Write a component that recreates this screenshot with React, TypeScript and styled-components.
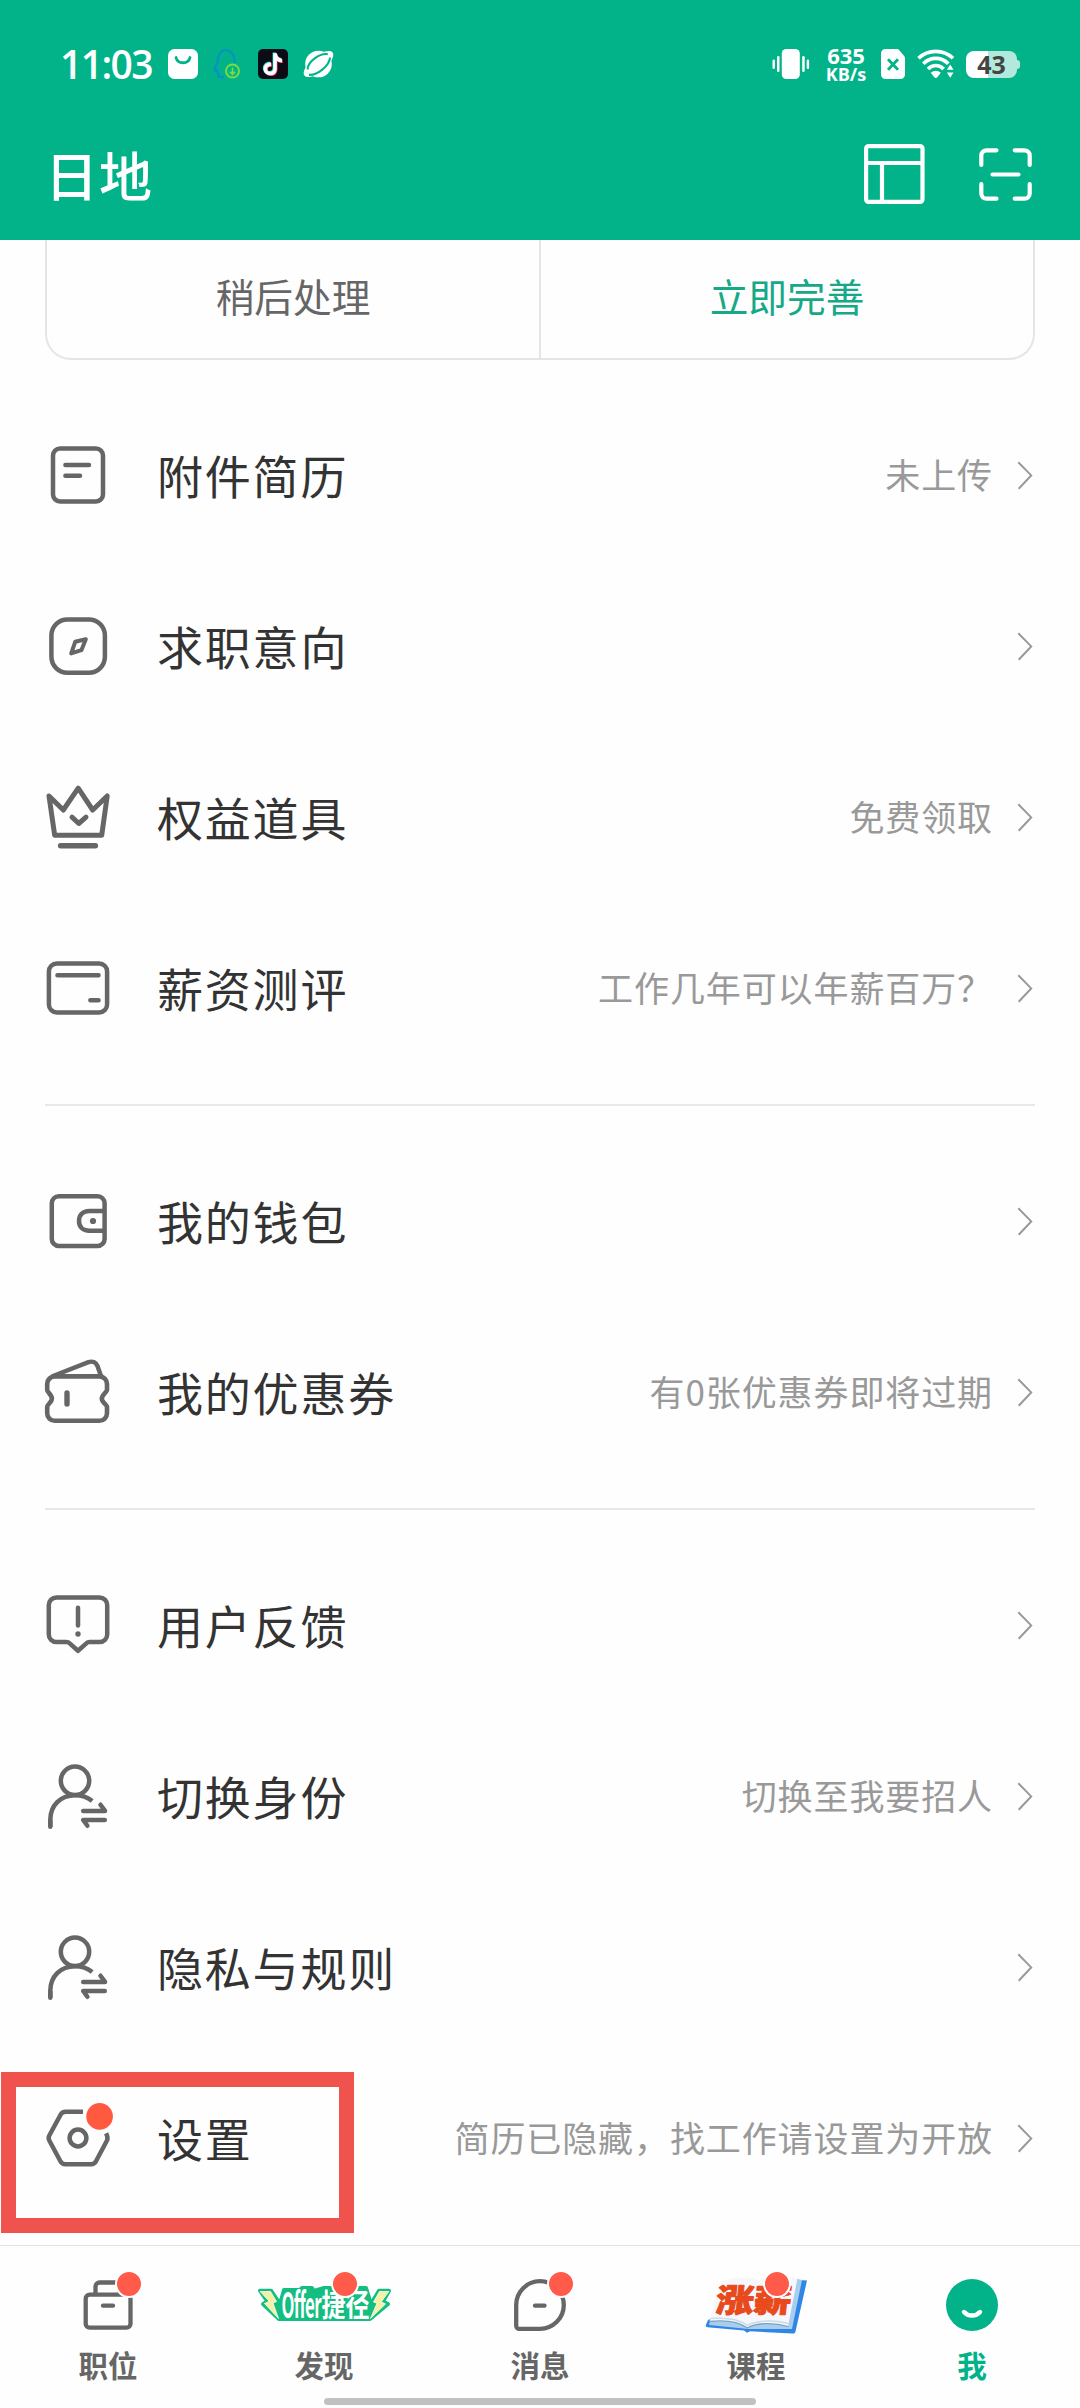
import React from 'react';
import styled, { createGlobalStyle } from 'styled-components';

const GREEN = '#02b38a';
const GREY = '#666666';
const RED = '#ff5a4a';

const GlobalStyle = createGlobalStyle`
  *, *::before, *::after { box-sizing: border-box; }
  body {
    margin: 0;
    background: #fefefe;
    font-family: "Noto Sans CJK SC", "Noto Sans", sans-serif;
  }
`;

const Screen = styled.div`
  position: relative;
  display: flex;
  flex-direction: column;
  width: 1080px;
  height: 2408px;
  overflow: hidden;
  background: #fefefe;
`;

const Header = styled.header`
  height: 240px;
  background: ${GREEN};
  color: #fff;
`;

const StatusBar = styled.div`
  display: flex;
  justify-content: space-between;
  align-items: center;
  height: 128px;
  padding: 0 60px 0 60px;
`;

const StatusGroup = styled.div<{ $gap: number }>`
  display: flex;
  align-items: center;
  gap: ${(p) => p.$gap}px;
`;

const Clock = styled.span`
  width: 91px;
  margin-right: 1px;
  font: 600 39px/40px "Open Sans", "Noto Sans", sans-serif;
  letter-spacing: -1.6px;
  white-space: nowrap;
`;

const Speed = styled.div`
  display: flex;
  flex-direction: column;
  align-items: center;
  gap: 1px;
  width: 44px;
  margin-left: 2px;
  margin-right: 1px;
  font-family: "Open Sans", "Noto Sans", sans-serif;
  font-weight: 700;
`;

const SpeedValue = styled.span`
  font-size: 22px;
  line-height: 18px;
`;

const SpeedUnit = styled.span`
  font-size: 18px;
  line-height: 18px;
`;

const Battery = styled.div`
  position: relative;
  display: flex;
  align-items: center;
  justify-content: center;
  width: 51px;
  height: 27px;
  margin-left: -1px;
  margin-right: 3px;
  border-radius: 8px;
  background: linear-gradient(90deg, #fff 44%, #b3e8dc 44%);
  color: #444;
  font: 700 25px/27px "Open Sans", "Noto Sans", sans-serif;

  &::after {
    content: '';
    position: absolute;
    right: -3px;
    top: 9px;
    width: 3px;
    height: 9px;
    border-radius: 0 3px 3px 0;
    background: #b3e8dc;
  }
`;

const TitleBar = styled.div`
  display: flex;
  justify-content: space-between;
  align-items: center;
  height: 92px;
  padding: 0 48px 0 45px;
`;

const Title = styled.h1`
  margin: 0;
  font-size: 53px;
  font-weight: 500;
  line-height: 60px;
  letter-spacing: 1px;
`;

const Actions = styled.div`
  display: flex;
  align-items: center;
  gap: 54px;
`;

const Card = styled.section`
  display: flex;
  height: 120px;
  margin: 0 45px;
  border: 2px solid #e5e5e5;
  border-top: none;
  border-radius: 0 0 26px 26px;
`;

const CardAction = styled.button<{ $primary?: boolean }>`
  flex: 1;
  padding: 0 0 8px;
  border: none;
  border-left: ${(p) => (p.$primary ? '2px solid #e5e5e5' : 'none')};
  background: none;
  color: ${(p) => (p.$primary ? '#16a887' : GREY)};
  font: 400 38.7px/56px "Noto Sans CJK SC", sans-serif;
`;

const Menu = styled.main`
  display: flex;
  flex-direction: column;
  padding-top: 30px;
`;

const Row = styled.div`
  display: flex;
  align-items: center;
  height: 171px;
  padding: 0 45px 0 42px;
`;

const RowLabel = styled.span`
  flex: 1;
  margin: 0 0 3px 43px;
  color: #333;
  font-size: 46px;
  line-height: 60px;
  letter-spacing: 1.8px;
  white-space: nowrap;
`;

const RowValue = styled.span`
  margin: 0 25px 3px 0;
  color: #999;
  font-size: 35px;
  line-height: 50px;
  letter-spacing: 0.9px;
  white-space: nowrap;
`;

const Divider = styled.hr`
  width: 990px;
  height: 2px;
  margin: 30px 45px;
  border: none;
  background: #e8e8e8;
`;

const TabBar = styled.nav`
  display: grid;
  grid-template-columns: repeat(5, 1fr);
  height: 163px;
  margin-top: auto;
  border-top: 1px solid #e3e3e3;
`;

const Tab = styled.div<{ $active?: boolean }>`
  position: relative;
  display: flex;
  flex-direction: column;
  align-items: center;
  padding-top: 26px;
  color: ${(p) => (p.$active ? GREEN : GREY)};
`;

const TabLabel = styled.span`
  margin-top: 8px;
  font-size: 29.5px;
  font-weight: 700;
  line-height: 40px;
`;

const TabBadge = styled.i`
  position: absolute;
  left: 115px;
  top: 24px;
  width: 28px;
  height: 28px;
  border: 2px solid #fff;
  border-radius: 50%;
  background: ${RED};
`;

const Highlight = styled.div`
  position: absolute;
  left: 1px;
  top: 2072px;
  width: 353px;
  height: 161px;
  border: 15px solid #f0524d;
`;

const HomeIndicator = styled.div`
  position: absolute;
  left: 324px;
  bottom: 3px;
  width: 432px;
  height: 7px;
  border-radius: 4px;
  background: #c1c1c1;
`;

const Glyph = styled.svg`
  display: block;
  flex: none;
  overflow: visible;
`;

const RowGlyph = ({ children }: { children: React.ReactNode }) => (
  <Glyph width="72" height="71" viewBox="0 0 72 71" fill="none" stroke={GREY} strokeWidth="4.5" strokeLinecap="round" strokeLinejoin="round">
    {children}
  </Glyph>
);

const ResumeIcon = () => (
  <RowGlyph>
    <rect x="11" y="8.5" width="50" height="53" rx="7" />
    <path d="M23.4 25H47M23.4 35.8H38" />
  </RowGlyph>
);

const CompassIcon = () => (
  <RowGlyph>
    <rect x="9.4" y="8.4" width="53.5" height="53.4" rx="16" />
    <path d="M43.8 28.2 33.2 30.8 29.2 42.4 39.4 39.2Z" strokeWidth="4" />
  </RowGlyph>
);

const CrownIcon = () => (
  <RowGlyph>
    <path d="M7 14 21.3 28 36.2 6.2 50.7 28 65.2 14 59.7 53.3H12.7Z" strokeWidth="5" />
    <path d="M30 35.2 36.8 41.5 44 35.2" strokeWidth="5" />
    <path d="M18.6 63.8H53.4" strokeWidth="5.4" />
  </RowGlyph>
);

const CardIcon = () => (
  <RowGlyph>
    <rect x="6.9" y="10.4" width="58.2" height="49" rx="8" />
    <path d="M15.5 22.3H56.5M48.4 47.3H56.5" strokeWidth="4.6" />
  </RowGlyph>
);

const WalletIcon = () => (
  <RowGlyph>
    <rect x="9.8" y="10.2" width="52.8" height="49.8" rx="7" />
    <path d="M62 25H47.5C40.5 25 37 29.3 37 35s3.5 9.7 10.5 9.7H62" />
    <circle cx="51" cy="35" r="3.1" fill={GREY} stroke="none" />
  </RowGlyph>
);

const CouponIcon = () => (
  <RowGlyph>
    <path d="M13 19.4H57.5a7.5 7.5 0 0 1 7.5 7.5V33c0 2-5.2 5-5.2 8.7s5.2 5.6 5.2 8.3V56.3a7.5 7.5 0 0 1-7.5 7.5H12.7a7.5 7.5 0 0 1-7.5-7.5V50c0-2.7 4.7-4.6 4.7-8.3S5.2 35 5.2 33V26.9A7.5 7.5 0 0 1 13 19.4Z" strokeWidth="4.6" />
    <path d="M11 19 46.5 5.2c4.5-1.6 7.8.5 9 3.8L59 19" />
    <path d="M25 36V47" strokeWidth="5.4" />
  </RowGlyph>
);

const FeedbackIcon = () => (
  <RowGlyph>
    <path d="M14.5 7.4H57.5a7.7 7.7 0 0 1 7.7 7.7V44.4a7.7 7.7 0 0 1-7.7 7.7H47.5c-2 0-2.8.5-4 2L36 60.8 28.5 54.1c-1.2-1.5-2-2-4-2H14.5a7.7 7.7 0 0 1-7.7-7.7V15.1a7.7 7.7 0 0 1 7.7-7.7Z" />
    <path d="M36 17.8V35.4" />
    <circle cx="36" cy="44" r="2.7" fill={GREY} stroke="none" />
  </RowGlyph>
);

const SwitchUserIcon = () => (
  <RowGlyph>
    <circle cx="33" cy="19.8" r="14.2" />
    <path d="M8.3 65.8V59C8.3 44.5 18.5 34.3 33 34.3c7 0 12.5 2 17.2 5.8" strokeLinecap="butt" />
    <path d="M8.3 65.7V60" />
    <path d="M41.2 49.9H63L58.5 43.7M62.8 59H41.2L45.4 64.8" />
  </RowGlyph>
);

const SettingsIcon = () => (
  <RowGlyph>
    <path d="M41 8.7H23.5c-2.7 0-3.7.7-4.8 2.8L7.3 32.5c-1 1.9-1 3.1 0 5l11 20.5c1.1 2.2 2.3 3.2 4.8 3.2H49.3c2.5 0 3.7-1 4.8-3.2L65 37.5c1.1-2 .9-3.6-.9-7.2" strokeLinecap="butt" />
    <circle cx="36" cy="35" r="8.4" />
    <circle cx="57.6" cy="13.4" r="13.3" fill="#ff5a40" stroke="none" />
  </RowGlyph>
);

const Chevron = () => (
  <Glyph width="17" height="30" viewBox="0 0 17 30" fill="none" stroke="#999" strokeWidth="2">
    <path d="M.3 1.2 13.2 14.4.7 27.8" />
  </Glyph>
);

const BagIcon = () => (
  <Glyph width="30" height="30" viewBox="0 0 30 30">
    <rect width="30" height="30" rx="6.5" fill="#fff" />
    <path d="M8 8.5c1.5 7 12.5 7 14 0" fill="none" stroke={GREEN} strokeWidth="2.8" strokeLinecap="round" />
  </Glyph>
);

const PenguinIcon = () => (
  <Glyph width="29" height="30" viewBox="-1 0 29 30" fill="none">
    <path d="M10 27.5c-3 1.7-7 .7-5.3-2.3C3.500 24 3.200 22.700 3 21.500 1.500 23.500.3 21.500 1 18.700c.4-1.800 1.700-3.600 2.600-5C3.400 6.200 6.800 1.300 12 1.300s9 4.700 8.700 12" stroke="#0a8fc8" strokeWidth="2.1" strokeLinecap="round" />
    <circle cx="18.5" cy="22" r="6.5" stroke="#7bdc42" strokeWidth="1.9" />
    <path d="M18.5 18.500v6.600m-2.600-2.400 2.600 2.600 2.600-2.600" stroke="#7bdc42" strokeWidth="1.600" />
  </Glyph>
);

const NOTE = 'M16.3 4.5h3.5c.4 3.2 2.2 5.1 5.2 5.5v3.6c-2-.1-3.7-.7-5.2-1.7v8c0 4.3-3 6.6-6.5 6.6-3.7 0-6.7-2.7-6.7-6.4 0-4.1 3.4-6.8 7.5-6.3v3.7c-2.2-.6-3.9.7-3.9 2.6 0 1.7 1.3 2.8 3 2.8 1.9 0 3.1-1.2 3.1-3.3Z';

const TiktokIcon = () => (
  <Glyph width="30" height="30" viewBox="0 0 30 30">
    <rect width="30" height="30" rx="5" fill="#0c0c16" />
    <path d={NOTE} fill="#2ce6e0" transform="translate(-1.7 -.9)" />
    <path d={NOTE} fill="#f8335c" transform="translate(-.3 .5)" />
    <path d={NOTE} fill="#fff" transform="translate(-1 -.2)" />
  </Glyph>
);

const PlanetIcon = () => (
  <Glyph width="31" height="30" viewBox="0 0 31 30">
    <circle cx="15.5" cy="15" r="13.3" fill="#fff" />
    <ellipse cx="15.5" cy="15" rx="18.2" ry="7.6" transform="rotate(-40 15.5 15)" fill="#fff" />
    <path d="M4.6 20.500C4.500 12.500 17 3.800 24.800 5.200" fill="none" stroke={GREEN} strokeWidth="2.1" />
    <path d="M6 25.800C14 26.500 26.500 17 27 8.500" fill="none" stroke={GREEN} strokeWidth="2.1" />
  </Glyph>
);

const VibrateIcon = () => (
  <Glyph width="38" height="30" viewBox="0 0 38 30" fill="#fff">
    <rect x="9.8" width="18" height="30" rx="4.5" />
    <rect x=".5" y="10.5" width="2.4" height="9.5" rx="1.2" />
    <rect x="5" y="7" width="2.5" height="16" rx="1.2" />
    <rect x="30.2" y="7" width="2.5" height="16" rx="1.2" />
    <rect x="34.7" y="10.5" width="2.4" height="9.5" rx="1.2" />
  </Glyph>
);

const SimIcon = () => (
  <Glyph width="24" height="30" viewBox="0 0 24 30">
    <path d="M4.5 0H15.5c1.5 0 2 .4 3 1.5l4 4.7c1 1.1 1.5 2 1.5 3.5V25.5a4.5 4.5 0 0 1-4.5 4.5h-15A4.5 4.5 0 0 1 0 25.5v-21A4.5 4.5 0 0 1 4.5 0Z" fill="#fff" />
    <path d="m7 10.3 10 10.4m0-10.4L7 20.7" stroke={GREEN} strokeWidth="2.8" />
  </Glyph>
);

const WifiIcon = () => (
  <Glyph width="38" height="30" viewBox="0 0 38 30" fill="none" stroke="#fff" strokeWidth="3.7">
    <path d="M1.5 9.3C11 0 26.5 0 36 9.3" />
    <path d="M6.3 14.8c7-7.2 18-7.2 25 0" />
    <path d="M11 20c4.7-4.7 11-4.7 15.6 0" />
    <path d="M13.8 23.8c3-2.7 7-2.7 10 0l-3.5 4.5c-.9 1-2.1 1-3 0Z" fill="#fff" stroke="none" />
    <path d="m33.2 15.5 3.3 5.3h-6.6Zm0 13.3-3.3-5.3h6.6Z" fill="#fff" stroke="none" />
  </Glyph>
);

const LayoutIcon = () => (
  <Glyph width="61" height="60" viewBox="0 0 61 60" fill="none" stroke="#fff" strokeWidth="4.2">
    <rect x="2.1" y="2.1" width="56.4" height="55.8" rx="2.5" />
    <path d="M2 19H58M18 19V58" />
  </Glyph>
);

const ScanIcon = () => (
  <Glyph width="53" height="53" viewBox="0 0 53 53" fill="none" stroke="#fff" strokeWidth="4.2" strokeLinecap="round">
    <path d="M17.5 2.3H7.5a5.2 5.2 0 0 0-5.2 5.2V17M35.7 2.3H45.5a5.2 5.2 0 0 1 5.2 5.2V17M17.5 50.7H7.5a5.2 5.2 0 0 1-5.2-5.2V36M35.7 50.7H45.5a5.2 5.2 0 0 0 5.2-5.2V36M13.5 26.5H39.5" />
  </Glyph>
);

const TabGlyph = ({ children }: { children: React.ReactNode }) => (
  <Glyph width="140" height="64" viewBox="-70 0 140 64" fill="none" stroke={GREY} strokeWidth="4.3" strokeLinecap="round" strokeLinejoin="round">
    {children}
  </Glyph>
);

const JobsIcon = () => (
  <TabGlyph>
    <rect x="-22.3" y="22.7" width="44.8" height="33" rx="4" />
    <path d="M-12.5 22V14.5a4 4 0 0 1 4-4H12V22" />
    <path d="M-5 33.7H5" />
  </TabGlyph>
);

const OfferLogo = () => (
  <TabGlyph>
    <path d="M-64 18.7H-53L-44 32-40 18H-24L-22 16H-12L-10 19 0 16H42L47 32 55 18.7H65L59 29.5 64 32 46 47H-45L-61 32-56.5 29.5Z" fill="#14bd80" stroke="#14bd80" strokeWidth="4" />
    <path d="M-63.5 19.5H-53.5L-47.5 29.5-51 31-45.5 46.5-59.5 31.5-55 29.5Z" fill="#f4f1a4" stroke="#fff" strokeWidth=".8" />
    <path d="M64.5 19.5H55.5L49.5 30 53 31.2 46.5 46.5 61.5 32 57.5 30Z" fill="#f4f1a4" stroke="#fff" strokeWidth=".8" />
    <g fill="#fff" stroke="none" fontFamily='"Noto Sans CJK SC", sans-serif' fontWeight="700">
      <text transform="translate(-42.5 46) scale(.58 1.22)" fontSize="29" letterSpacing="-1">Offer</text>
      <text transform="translate(-2.5 43.5) scale(.8 1.02)" fontSize="30">捷径</text>
    </g>
  </TabGlyph>
);

const MessageIcon = () => (
  <TabGlyph>
    <path d="M0 9.2a23.8 23.8 0 0 1 0 47.6H-20.8a3 3 0 0 1-3-3V33A23.8 23.8 0 0 1 0 9.2Z" />
    <path d="M-5 33.7H4.5" />
  </TabGlyph>
);

const CourseLogo = () => (
  <TabGlyph>
    <path d="M43 8 51 8.5 39.5 59.500c-.5 1.700-1.500 2.200-3 2.100L-6 59.300l-3 1.500-3-2.300-36.500-3.300c-1.500-.2-2-1.200-1.500-2.700L-48 48Z" fill="#2f86e4" stroke="none" />
    <path d="M38 6 46 8 36 57-8 57-47 53-46 49Z" fill="#a9cdee" stroke="none" />
    <path d="M-35 9C-22 5-8 4.500 2 8c10-4 24-4 39.500-2L32 54.500C18 50-2 51-8.500 56-16 50-32 48.500-46.500 49.500Z" fill="#f6f7fc" stroke="none" />
    <path d="M-46.500 49.500c14-1.500 29 0 38 6.500 7-5 26-6 40.500-1.500" stroke="#7aa3bd" strokeWidth="1.300" />
    <path d="M-45 46.500c14-1 28 .5 36.500 7C-1 48.500 16 47.500 32 51.500" stroke="#c7dbe8" strokeWidth="1.500" />
    <text transform="translate(-41 39.500) skewX(-6) scale(1.180 1)" fontSize="32" fontFamily='"Noto Sans CJK SC", sans-serif' fontWeight="900" fill="#e84a1c" stroke="#e84a1c" strokeWidth="1">涨薪</text>
  </TabGlyph>
);

const SmileIcon = () => (
  <TabGlyph>
    <circle cx="0" cy="33" r="26" fill={GREEN} stroke="none" />
    <path d="M-8 40c4 4.600 12 4.600 16 0" stroke="#fff" strokeWidth="4.400" />
  </TabGlyph>
);

type Item = { icon: React.ReactNode; label: string; value?: string };

const sections: Item[][] = [
  [
    { icon: <ResumeIcon />, label: '附件简历', value: '未上传' },
    { icon: <CompassIcon />, label: '求职意向' },
    { icon: <CrownIcon />, label: '权益道具', value: '免费领取' },
    { icon: <CardIcon />, label: '薪资测评', value: '工作几年可以年薪百万？' },
  ],
  [
    { icon: <WalletIcon />, label: '我的钱包' },
    { icon: <CouponIcon />, label: '我的优惠券', value: '有0张优惠券即将过期' },
  ],
  [
    { icon: <FeedbackIcon />, label: '用户反馈' },
    { icon: <SwitchUserIcon />, label: '切换身份', value: '切换至我要招人' },
    { icon: <SwitchUserIcon />, label: '隐私与规则' },
    { icon: <SettingsIcon />, label: '设置', value: '简历已隐藏，找工作请设置为开放' },
  ],
];

const tabs = [
  { icon: <JobsIcon />, label: '职位', badge: true },
  { icon: <OfferLogo />, label: '发现', badge: true },
  { icon: <MessageIcon />, label: '消息', badge: true },
  { icon: <CourseLogo />, label: '课程', badge: true },
  { icon: <SmileIcon />, label: '我', badge: false, active: true },
];

export default function App() {
  return (
    <>
      <GlobalStyle />
      <Screen>
        <Header>
          <StatusBar>
            <StatusGroup $gap={15.5}>
              <Clock>11:03</Clock>
              <BagIcon />
              <PenguinIcon />
              <TiktokIcon />
              <PlanetIcon />
            </StatusGroup>
            <StatusGroup $gap={12}>
              <VibrateIcon />
              <Speed>
                <SpeedValue>635</SpeedValue>
                <SpeedUnit>KB/s</SpeedUnit>
              </Speed>
              <SimIcon />
              <WifiIcon />
              <Battery>43</Battery>
            </StatusGroup>
          </StatusBar>
          <TitleBar>
            <Title>日地</Title>
            <Actions>
              <LayoutIcon />
              <ScanIcon />
            </Actions>
          </TitleBar>
        </Header>
        <Card>
          <CardAction>稍后处理</CardAction>
          <CardAction $primary>立即完善</CardAction>
        </Card>
        <Menu>
          {sections.map((items, index) => (
            <React.Fragment key={index}>
              {index > 0 && <Divider />}
              {items.map((item) => (
                <Row key={item.label}>
                  {item.icon}
                  <RowLabel>{item.label}</RowLabel>
                  {item.value && <RowValue>{item.value}</RowValue>}
                  <Chevron />
                </Row>
              ))}
            </React.Fragment>
          ))}
        </Menu>
        <TabBar>
          {tabs.map((tab) => (
            <Tab key={tab.label} $active={tab.active}>
              {tab.icon}
              <TabLabel>{tab.label}</TabLabel>
              {tab.badge && <TabBadge />}
            </Tab>
          ))}
        </TabBar>
        <Highlight />
        <HomeIndicator />
      </Screen>
    </>
  );
}
